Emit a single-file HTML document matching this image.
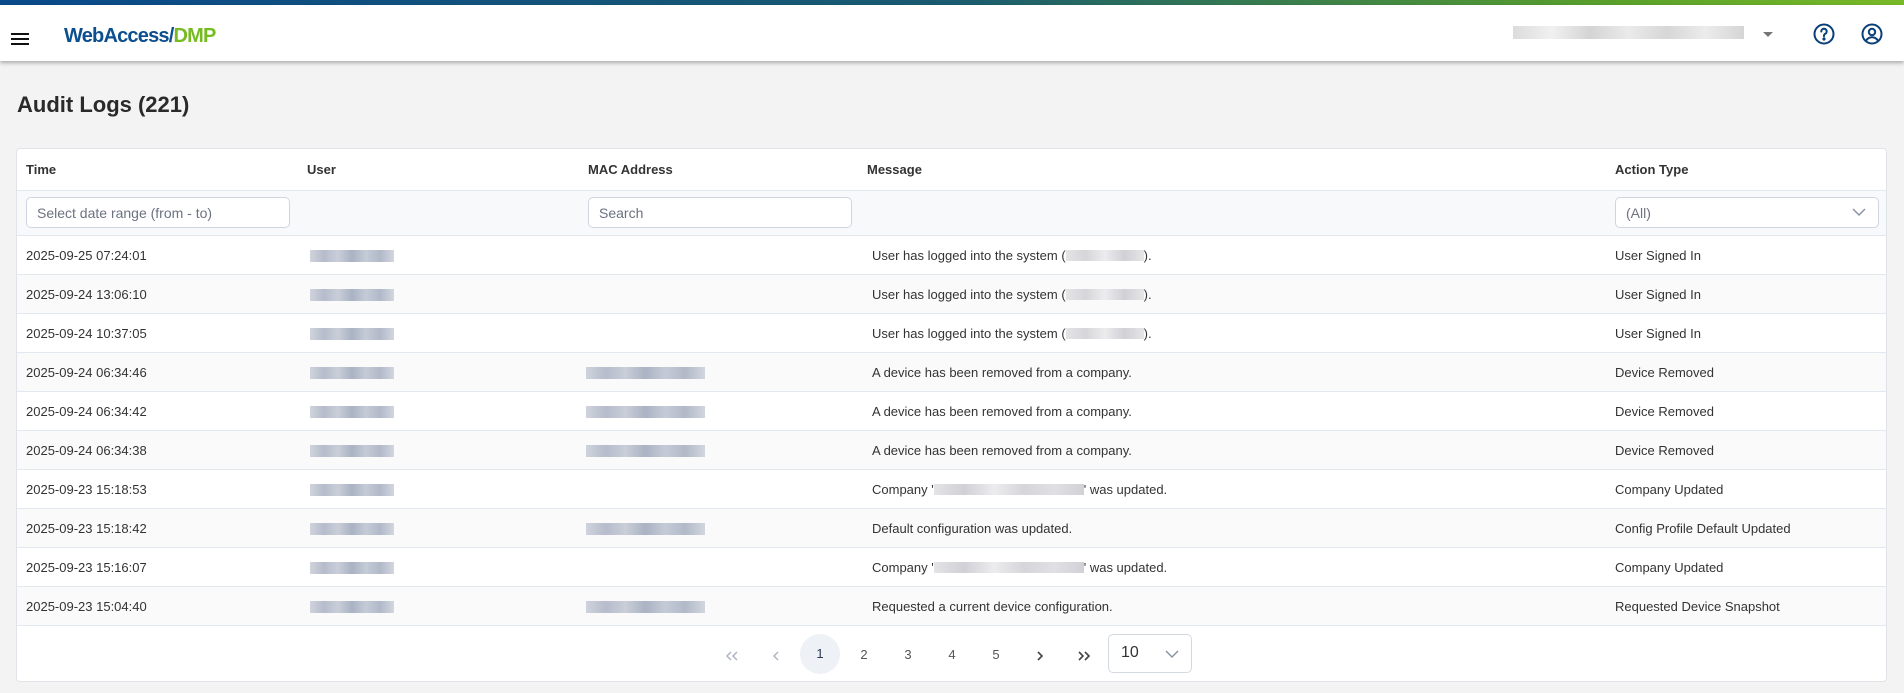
<!DOCTYPE html>
<html><head><meta charset="utf-8"><style>
*{box-sizing:border-box;margin:0;padding:0}
body{width:1904px;height:693px;overflow:hidden;background:#f3f3f3;font-family:"Liberation Sans",Arial,sans-serif;color:#333;position:relative}
.topbar{position:absolute;left:0;top:0;width:1904px;height:5px;background:linear-gradient(90deg,#0a4a8a 0%,#1a5b70 50%,#5aa12a 85%,#79b928 100%)}
.hdr{position:absolute;left:0;top:5px;width:1904px;height:56px;background:#fff;box-shadow:0 2px 4px rgba(0,0,0,.3)}
.ham{position:absolute;left:11px;top:28px;width:18px;height:2px;background:#111;box-shadow:0 5px 0 #111,0 10px 0 #111}
.logo{position:absolute;left:64px;top:19px;font-size:20px;font-weight:bold;letter-spacing:-0.8px;color:#0b4f8e;line-height:24px}
.logo span{color:#76bc21}
.blur{position:absolute;background:linear-gradient(90deg,#d8d8d8,#efefef,#cfcfcf,#e8e8e8,#d2d2d2,#eaeaea,#d0d0d0);opacity:.9}
h1{position:absolute;left:17px;top:92px;font-size:22px;font-weight:bold;color:#2a2a2a}
.card{position:absolute;left:16px;top:148px;width:1871px;height:534px;background:#fff;border:1px solid #e0e3e8;border-radius:4px;overflow:hidden}
.row{position:absolute;left:0;width:100%;border-bottom:1px solid #e3e7ee;font-size:13px}
.c{position:absolute;white-space:nowrap}
.th{font-weight:bold;font-size:13px;color:#333}
.inp{position:absolute;height:31px;border:1px solid #cfd6e0;border-radius:5px;background:#fff;font-size:14px;color:#6b7280;padding:7px 10px}
.ub{position:absolute;height:12px;background:linear-gradient(90deg,#cfd3dc,#b6bccb,#c9ced8,#aab3c4,#c5cbd6,#b1b9c9,#d2d6de)}
.pg{position:absolute;top:0;font-size:13px;color:#555;width:40px;text-align:center;line-height:55px}
.pg svg{vertical-align:middle}
</style></head><body>
<div class="topbar"></div>
<div class="hdr">
<div class="ham"></div>
<div class="logo">WebAccess/<span>DMP</span></div>
<div class="blur" style="left:1513px;top:21px;width:231px;height:13px"></div>
<div style="position:absolute;left:1763px;top:27px;width:0;height:0;border-left:5px solid transparent;border-right:5px solid transparent;border-top:5px solid #777"></div>
<svg style="position:absolute;left:1812px;top:17px" width="24" height="24" viewBox="0 0 24 24" fill="none" stroke="#0b3f7a" stroke-width="2"><circle cx="12" cy="12" r="9.5"/><path d="M9.3 9.5a2.7 2.7 0 1 1 3.8 2.4c-.8.4-1.1.9-1.1 1.8v.6" stroke-linecap="round"/><circle cx="12" cy="17" r=".6" fill="#0b3f7a"/></svg>
<svg style="position:absolute;left:1860px;top:17px" width="24" height="24" viewBox="0 0 24 24" fill="none" stroke="#0b3f7a" stroke-width="2"><circle cx="12" cy="12" r="9.5"/><circle cx="12" cy="10" r="3.2"/><path d="M6.2 18.5c1.5-2.2 3.5-3.2 5.8-3.2s4.3 1 5.8 3.2"/></svg>
</div>
<h1>Audit Logs (221)</h1>
<div class="card">
<div class="row" style="top:0;height:42px;background:#fff">
<div class="c th" style="left:9px;top:13px">Time</div>
<div class="c th" style="left:290px;top:13px">User</div>
<div class="c th" style="left:571px;top:13px">MAC Address</div>
<div class="c th" style="left:850px;top:13px">Message</div>
<div class="c th" style="left:1598px;top:13px">Action Type</div>
</div>
<div class="row" style="top:42px;height:45px;background:#f8f9fb">
<div class="inp" style="left:9px;top:6px;width:264px">Select date range (from - to)</div>
<div class="inp" style="left:571px;top:6px;width:264px">Search</div>
<div class="inp" style="left:1598px;top:6px;width:264px">(All)<svg style="position:absolute;right:12px;top:10px" width="14" height="9" viewBox="0 0 14 9" fill="none" stroke="#8a94a6" stroke-width="1.5"><path d="M1 1l6 6 6-6"/></svg></div>
</div>
<div id="rows"></div>
<div style="position:absolute;left:0;top:478px;width:100%;height:55px">
<div class="pg" style="left:695px"><svg width="14" height="12" viewBox="0 0 14 12" fill="none" stroke="#b0b6c2" stroke-width="1.5"><path d="M6 2L2 6l4 4M12 2L8 6l4 4"/></svg></div>
<div class="pg" style="left:739px"><svg width="8" height="12" viewBox="0 0 8 12" fill="none" stroke="#b0b6c2" stroke-width="1.5"><path d="M6 2L2 6l4 4"/></svg></div>
<div class="pg" style="left:783px;top:7px;line-height:40px;height:40px;border-radius:50%;background:#eef1f5;color:#2a3a55">1</div>
<div class="pg" style="left:827px">2</div>
<div class="pg" style="left:871px">3</div>
<div class="pg" style="left:915px">4</div>
<div class="pg" style="left:959px">5</div>
<div class="pg" style="left:1003px"><svg width="8" height="12" viewBox="0 0 8 12" fill="none" stroke="#444" stroke-width="1.6"><path d="M2 2l4 4-4 4"/></svg></div>
<div class="pg" style="left:1047px"><svg width="14" height="12" viewBox="0 0 14 12" fill="none" stroke="#444" stroke-width="1.6"><path d="M2 2l4 4-4 4M8 2l4 4-4 4"/></svg></div>
<div style="position:absolute;left:1091px;top:7px;width:84px;height:39px;border:1px solid #d3d9e3;border-radius:5px;font-size:16px;color:#333;padding:9px 12px">10<svg style="position:absolute;right:12px;top:15px" width="14" height="9" viewBox="0 0 14 9" fill="none" stroke="#8a94a6" stroke-width="1.5"><path d="M1 1l6 6 6-6"/></svg></div>
</div>
</div>
<script>
var d=[["2025-09-25 07:24:01",1,0,"User has logged into the system (<b1>).","User Signed In"],
["2025-09-24 13:06:10",1,0,"User has logged into the system (<b1>).","User Signed In"],
["2025-09-24 10:37:05",1,0,"User has logged into the system (<b1>).","User Signed In"],
["2025-09-24 06:34:46",1,1,"A device has been removed from a company.","Device Removed"],
["2025-09-24 06:34:42",1,1,"A device has been removed from a company.","Device Removed"],
["2025-09-24 06:34:38",1,1,"A device has been removed from a company.","Device Removed"],
["2025-09-23 15:18:53",1,0,"Company '<b2>' was updated.","Company Updated"],
["2025-09-23 15:18:42",1,1,"Default configuration was updated.","Config Profile Default Updated"],
["2025-09-23 15:16:07",1,0,"Company '<b2>' was updated.","Company Updated"],
["2025-09-23 15:04:40",1,1,"Requested a current device configuration.","Requested Device Snapshot"]];
var h="";
d.forEach(function(r,i){
var m=r[3].replace("<b1>",'<span style="display:inline-block;width:78px;height:11px;vertical-align:-1px;background:linear-gradient(90deg,#e4e4e6,#d6d6da,#ececee,#d0d0d6,#e6e6e8)"></span>').replace("<b2>",'<span style="display:inline-block;width:150px;height:11px;vertical-align:-1px;background:linear-gradient(90deg,#e4e4e6,#d0d0d6,#ececee,#d6d6da,#e0e0e4,#d0d0d6)"></span>');
h+='<div class="row" style="top:'+(87+i*39)+'px;height:39px;background:'+(i%2?'#fafafa':'#fff')+'">'+
'<div class="c" style="left:9px;top:12px">'+r[0]+'</div>'+
'<div class="ub" style="left:293px;top:14px;width:84px"></div>'+
(r[2]?'<div class="ub" style="left:569px;top:14px;width:119px"></div>':'')+
'<div class="c" style="left:855px;top:12px">'+m+'</div>'+
'<div class="c" style="left:1598px;top:12px">'+r[4]+'</div></div>';
});
document.getElementById("rows").innerHTML=h;
</script>
</body></html>
